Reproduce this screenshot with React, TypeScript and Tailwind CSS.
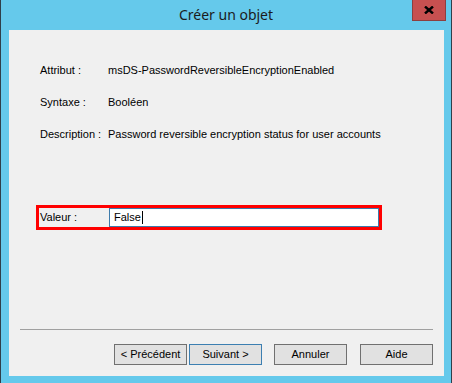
const rows = [
  { label: 'Attribut :', value: 'msDS-PasswordReversibleEncryptionEnabled' },
  { label: 'Syntaxe :', value: 'Booléen' },
  { label: 'Description :', value: 'Password reversible encryption status for user accounts' },
];

const DialogButton = ({ children, primary }: { children: string; primary?: boolean }) => (
  <button
    className={`h-[21px] w-[73px] border bg-[#e1e1e1] text-[11px] leading-none text-black ${
      primary ? 'border-[#3c7fb1]' : 'border-[#707070]'
    }`}
  >
    {children}
  </button>
);

export default function App() {
  return (
    <div
      className="flex h-[383px] w-[452px] flex-col border-x border-[#2f3f4a] bg-[#65c9eb]"
      style={{ fontFamily: '"Liberation Sans", Arial, sans-serif' }}
    >
      {/* title bar */}
      <div className="relative flex h-[30px] shrink-0 items-center justify-center">
        <span
          className="pb-[2px] text-[14px] text-[#1b1b1b]"
          style={{ fontFamily: '"Noto Sans", "Open Sans", sans-serif' }}
        >
          Créer un objet
        </span>
        <button className="absolute right-[5px] top-0 flex h-[21px] w-[34px] items-center justify-center border border-t-0 border-[#8d3f3f] bg-[#c75050]">
          <svg width="10" height="8" viewBox="0 0 10 8">
            <path d="M1 0.5 L9 7.5 M9 0.5 L1 7.5" stroke="#000" strokeWidth="2.4" />
          </svg>
        </button>
      </div>

      {/* body */}
      <div className="mb-[7px] ml-[8px] mr-[7px] flex flex-1 flex-col bg-[#f0f0f0] pb-[11px] text-[11px] text-black">
        <div className="flex flex-col gap-[18px] pl-[31px] pt-[33px]">
          {rows.map((r) => (
            <div key={r.label} className="flex h-[14px] items-center">
              <span className="w-[68px] shrink-0">{r.label}</span>
              <span>{r.value}</span>
            </div>
          ))}
        </div>

        <div className="ml-[27px] mt-[64px] flex h-[25px] w-[346px] items-center border-[3px] border-[#ff0000] pl-[1px]">
          <span className="w-[69px] shrink-0">Valeur :</span>
          <div className="flex h-[19px] w-[270px] items-center border border-[#3d7bab] bg-white pl-[4px]">
            <span>False</span>
            <span className="ml-[1px] h-[13px] w-px bg-black" />
          </div>
        </div>

        <div className="mx-[11px] mt-auto border-t border-[#a0a0a0]" />

        <div className="mt-[14px] flex justify-end pr-[11px]">
          <DialogButton>{'< Précédent'}</DialogButton>
          <div className="ml-[2px]">
            <DialogButton primary>{'Suivant >'}</DialogButton>
          </div>
          <div className="ml-[12px]">
            <DialogButton>Annuler</DialogButton>
          </div>
          <div className="ml-[13px]">
            <DialogButton>Aide</DialogButton>
          </div>
        </div>
      </div>
    </div>
  );
}
